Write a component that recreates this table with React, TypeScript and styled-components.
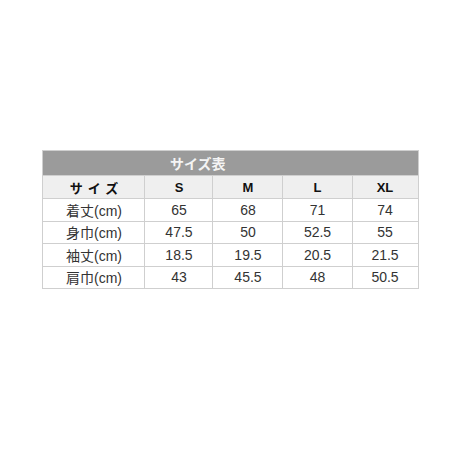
import { createGlobalStyle } from "styled-components";
import styled from "styled-components";

const GlobalStyle = createGlobalStyle`
  html, body {
    margin: 0;
    padding: 0;
    background: #ffffff;
  }
  body {
    font-family: "Liberation Sans", "Noto Sans CJK JP", sans-serif;
  }
`;

const Page = styled.div`
  width: 460px;
  height: 460px;
  display: flex;
  justify-content: center;
  align-items: flex-start;
  padding-top: 150px;
  padding-left: 1px;
  box-sizing: border-box;
`;

const Table = styled.table`
  width: 375px;
  border-collapse: collapse;
  table-layout: fixed;
  border: 1px solid #cfcfcf;
`;

const TitleCell = styled.th`
  height: 24px;
  padding: 0;
  background: #9b9b9b;
  color: #f4f4f4;
  font-size: 14px;
  font-weight: bold;
  text-align: center;
  border: none;
`;

const HeadCell = styled.th<{ $spaced?: boolean }>`
  height: 22px;
  padding: 0;
  background: #efefef;
  color: #111;
  font-size: 13px;
  font-weight: bold;
  text-align: center;
  border: 1px solid #cfcfcf;
  letter-spacing: ${(p) => (p.$spaced ? "5px" : "0")};
  text-indent: ${(p) => (p.$spaced ? "5px" : "0")};
`;

const Cell = styled.td`
  height: 21.5px;
  padding: 0;
  color: #333;
  font-size: 14px;
  text-align: center;
  border: 1px solid #cfcfcf;
  background: #fff;
`;

const widths = [102, 68, 70, 69, 66];
const sizes = ["S", "M", "L", "XL"];
const rows: [string, string[]][] = [
  ["着丈(cm)", ["65", "68", "71", "74"]],
  ["身巾(cm)", ["47.5", "50", "52.5", "55"]],
  ["袖丈(cm)", ["18.5", "19.5", "20.5", "21.5"]],
  ["肩巾(cm)", ["43", "45.5", "48", "50.5"]],
];

export default function App() {
  return (
    <>
      <GlobalStyle />
      <Page>
        <Table>
          <colgroup>
            {widths.map((w, i) => (
              <col key={i} style={{ width: w }} />
            ))}
          </colgroup>
          <thead>
            <tr>
              <TitleCell colSpan={4}>サイズ表</TitleCell>
              <TitleCell />
            </tr>
            <tr>
              <HeadCell $spaced>サイズ</HeadCell>
              {sizes.map((s) => (
                <HeadCell key={s}>{s}</HeadCell>
              ))}
            </tr>
          </thead>
          <tbody>
            {rows.map(([label, vals]) => (
              <tr key={label}>
                <Cell>{label}</Cell>
                {vals.map((v, i) => (
                  <Cell key={i}>{v}</Cell>
                ))}
              </tr>
            ))}
          </tbody>
        </Table>
      </Page>
    </>
  );
}
